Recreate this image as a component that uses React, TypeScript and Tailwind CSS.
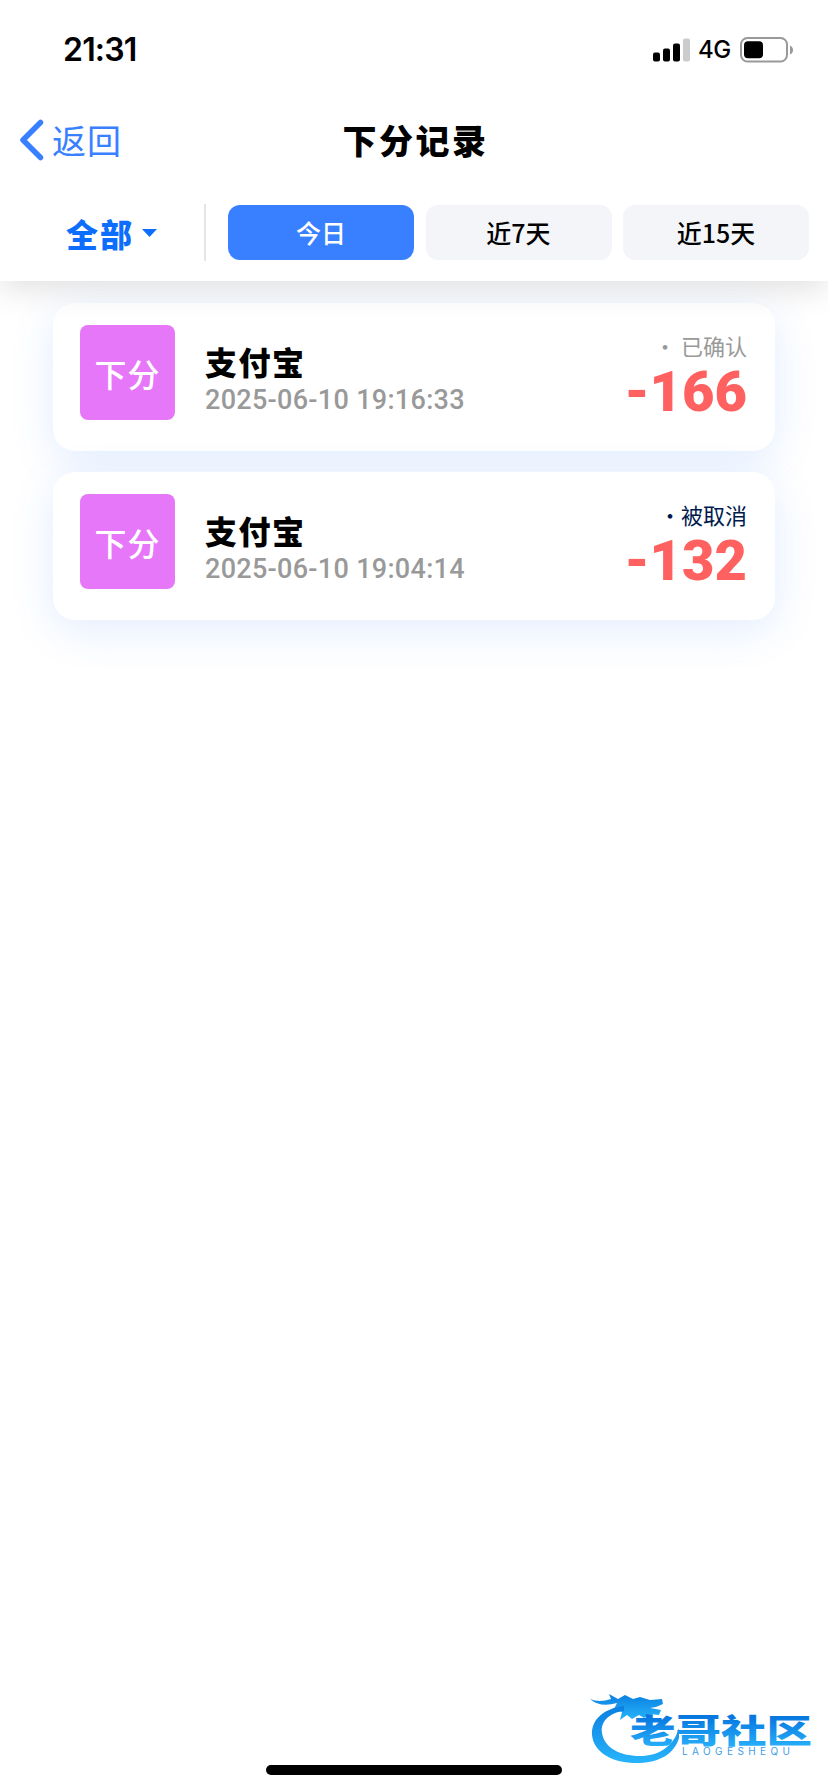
type RecordItem = {
  id: number;
  title: string;
  time: string;
  status: string;
  amount: string;
  statusClass: string;
};

const ranges = [
  { id: "today", label: "今日", className: "bg-[#3880ff] text-white" },
  { id: "week", label: "近7天", className: "bg-[#f4f5f9] text-black" },
  { id: "half", label: "近15天", className: "bg-[#f4f5f9] text-black" },
];

const records: RecordItem[] = [
  {
    id: 1,
    title: "支付宝",
    time: "2025-06-10 19:16:33",
    status: "· 已确认",
    amount: "-166",
    statusClass: "text-[#999999]",
  },
  {
    id: 2,
    title: "支付宝",
    time: "2025-06-10 19:04:14",
    status: "·被取消",
    amount: "-132",
    statusClass: "text-[#001a4d]",
  },
];

function StatusBar() {
  return (
    <div className="flex h-[100px] items-center justify-between pl-[63px] pr-[34px] font-['Inter',sans-serif]">
      <span className="text-[32px] font-semibold leading-none tracking-[-0.8px]">21:31</span>
      <div className="flex items-center">
        <svg width="37" height="24" viewBox="0 0 37 24">
          <rect x="0" y="14.5" width="7" height="9" rx="2" />
          <rect x="10" y="10.5" width="7" height="13" rx="2" />
          <rect x="20" y="5.5" width="7" height="18" rx="2" />
          <rect x="30" y="0.5" width="7" height="23" rx="2" fill="#cccccc" />
        </svg>
        <span className="ml-[8px] w-[35px] text-[24px] font-medium leading-none tracking-[-0.5px]">4G</span>
        <svg className="ml-[7px]" width="54" height="26" viewBox="0 0 54 26">
          <rect x="1" y="1" width="46" height="23.5" rx="6.5" fill="none" stroke="#999999" strokeWidth="2" />
          <rect x="4" y="4.200" width="19" height="17" rx="4" />
          <path d="M50 8.500Q53 10 53 13Q53 16 50 17.500Z" fill="#999999" />
        </svg>
      </div>
    </div>
  );
}

function NavBar() {
  return (
    <div className="grid h-[80px] grid-cols-3 items-center">
      <div className="flex items-center pl-[19px] text-[#3880ff]">
        <svg width="25" height="42" viewBox="0 0 25 42" fill="none">
          <path d="M21.500 3.500L4 21L21.500 38.500" stroke="currentColor" strokeWidth="5.500" strokeLinecap="round" strokeLinejoin="round" />
        </svg>
        <span className="ml-[8px] text-[34px] leading-none tracking-[1px]">返回</span>
      </div>
      <h1 className="whitespace-nowrap pl-[3px] text-center text-[34px] font-black leading-none tracking-[2.500px]">
        下分记录
      </h1>
    </div>
  );
}

function FilterBar() {
  return (
    <div className="flex h-[101px] items-start pt-[24px]">
      <div className="flex h-[57px] w-[206px] items-center border-r-2 border-[#e5e5e5] pl-[66px] text-[#0d6efd]">
        <span className="text-[32px] font-black leading-none tracking-[2px]">全部</span>
        <svg className="ml-[8px]" width="15" height="8" viewBox="0 0 15 8" fill="currentColor">
          <path d="M0 0H15L7.500 8Z" />
        </svg>
      </div>
      <div className="ml-[22px] mt-px flex gap-[11.500px]">
        {ranges.map((range) => (
          <button
            key={range.id}
            className={`flex h-[55px] w-[186px] items-center justify-center rounded-[12px] text-[25px] font-medium leading-none ${range.className}`}
          >
            {range.label}
          </button>
        ))}
      </div>
    </div>
  );
}

function RecordCard({ item }: { item: RecordItem }) {
  return (
    <div className="flex h-[148px] rounded-[22px] bg-white pl-[27px] pr-[28px] pt-[22px] shadow-[0_10px_45px_rgba(13,110,253,0.12)]">
      <div className="flex size-[95px] items-center justify-center rounded-[8px] bg-[#e777f9] text-[32px] font-medium leading-none tracking-[1px] text-white">
        下分
      </div>
      <div className="ml-[30px] flex-1 pt-[19px]">
        <div className="text-[32px] font-black leading-[34px] tracking-[1.500px]">{item.title}</div>
        <div className="mt-[6px] font-['Roboto',sans-serif] text-[27px] font-medium leading-[32px] tracking-[0.300px] text-[#999999]">
          {item.time}
        </div>
      </div>
      <div className="flex flex-col items-end">
        <div className={`mt-[6px] text-[22px] leading-[28px] ${item.statusClass}`}>{item.status}</div>
        <div className="font-['Roboto',sans-serif] text-[56px] font-black leading-[66px] text-[#ff6060]">
          {item.amount}
        </div>
      </div>
    </div>
  );
}

function Watermark() {
  return (
    <svg width="232" height="80" viewBox="0 0 232 80">
      <defs>
        <linearGradient id="ring" x1="0" y1="0" x2="0" y2="1">
          <stop offset="0" stopColor="#0a7fe0" />
          <stop offset="1" stopColor="#27b4fb" />
        </linearGradient>
        <linearGradient id="word" x1="0" y1="0" x2="0" y2="1">
          <stop offset="0.25" stopColor="#0878df" />
          <stop offset="0.85" stopColor="#25aef9" />
        </linearGradient>
      </defs>
      {/* dragon head and mane */}
      <path
        d="M0 9Q9 13 21 9L19 4L28 9L35 5L43 9L50 7L60 10L72 9L73 14L66 17L60 18L71 20L69 25L60 24L54 28L49 25L42 29L37 25L30 30L32 22L24 19L27 13Q10 18 0 9Z"
        fill="url(#ring)"
      />
      {/* tail sweeping round the name */}
      <path
        d="M34 16C15 18 1 29 2 45C4 64 25 74 50 73C70 72 84 64 89 48V38C84 56 69 66 50 66C29 66 14 57 12 43C10 30 22 22 34 21Z"
        fill="url(#ring)"
      />
      <text
        x="40"
        y="53"
        fontSize="34"
        fontWeight="900"
        textLength="182"
        lengthAdjust="spacingAndGlyphs"
        fill="url(#word)"
        fontFamily="Noto Sans CJK SC, sans-serif"
        transform="translate(0 2) scale(1 0.97)"
      >
        老哥社区
      </text>
      <text x="92" y="65" fontSize="10" textLength="108" fill="#3f9ce6" fontFamily="Inter, sans-serif">
        LAOGESHEQU
      </text>
    </svg>
  );
}

export default function App() {
  return (
    <div className="flex h-[1792px] w-[828px] flex-col overflow-hidden bg-white font-['Noto_Sans_CJK_SC',sans-serif] text-black">
      <header className="relative z-10 h-[281px] shrink-0 bg-white shadow-[0_8px_30px_rgba(0,0,0,0.12)]">
        <StatusBar />
        <NavBar />
        <FilterBar />
      </header>
      <main className="flex flex-1 flex-col gap-[21px] px-[53px] pt-[22px]">
        {records.map((item) => (
          <RecordCard key={item.id} item={item} />
        ))}
      </main>
      <footer className="flex h-[102px] shrink-0 flex-col items-center">
        <div className="self-end pr-[6px]">
          <Watermark />
        </div>
        <div className="-mt-[5px] h-[10px] w-[296px] rounded-full bg-black" />
      </footer>
    </div>
  );
}
